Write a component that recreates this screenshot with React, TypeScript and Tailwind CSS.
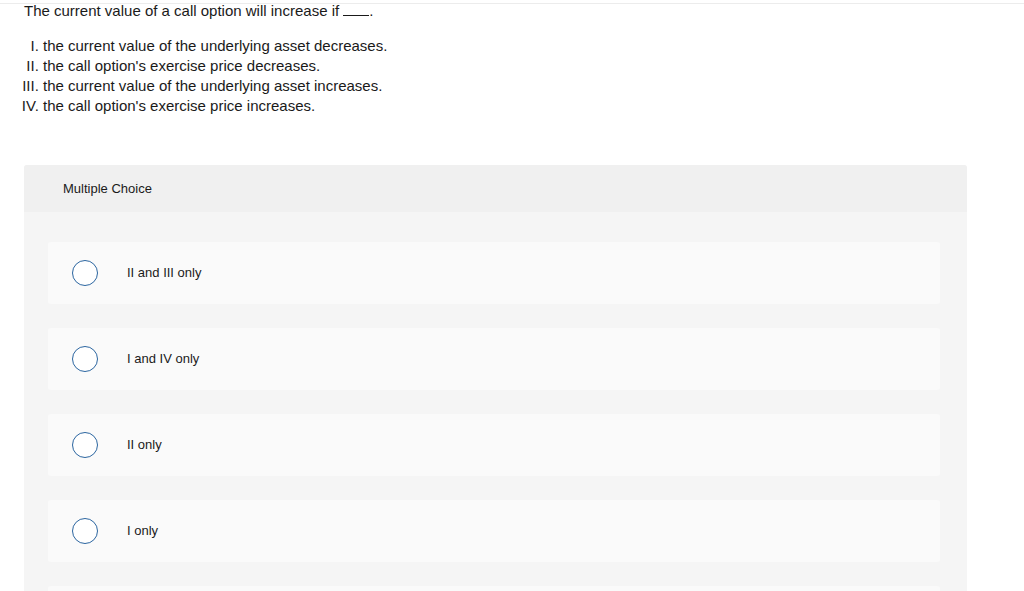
const OPTIONS = ["II and III only", "I and IV only", "II only", "I only", ""];

const STATEMENTS = [
  "the current value of the underlying asset decreases.",
  "the call option's exercise price decreases.",
  "the current value of the underlying asset increases.",
  "the call option's exercise price increases.",
];

export default function App() {
  return (
    <div
      className="h-[591px] overflow-hidden bg-white text-[#1a1a1a]"
      style={{ fontFamily: '"Liberation Sans", Arial, sans-serif' }}
    >
      <div className="mt-[3px] h-px bg-[#ececec]" />

      {/* Question */}
      <div className="-mt-[3px] px-6">
        <p className="text-[15px] leading-[20px]">
          The current value of a call option will increase if{" "}
          <span className="inline-block w-[26px] border-b border-[#1a1a1a] align-baseline" />.
        </p>
        <ol className="mt-[15px] list-[upper-roman] pl-[19px] text-[15px] leading-[20px]">
          {STATEMENTS.map((s) => (
            <li key={s}>{s}</li>
          ))}
        </ol>
      </div>

      {/* Answer panel */}
      <div className="mt-[49px] ml-6 w-[943px] rounded-t-[3px] bg-[#f5f5f5]">
        <div className="flex h-[47px] items-center rounded-t-[3px] bg-[#f0f0f0] pl-[39px] text-[13px]">
          Multiple Choice
        </div>
        <div className="flex flex-col gap-[24px] pl-6 pr-[27px] pt-[30px]">
          {OPTIONS.map((opt, i) => (
            <div key={i} className="flex h-[62px] items-center rounded-[3px] bg-[#fafafa] pl-6">
              {opt && (
                <>
                  <span className="h-[26px] w-[26px] rounded-full border-[1.5px] border-[#2b65a0] bg-white" />
                  <span className="ml-[29px] text-[13px]">{opt}</span>
                </>
              )}
            </div>
          ))}
        </div>
      </div>
    </div>
  );
}
